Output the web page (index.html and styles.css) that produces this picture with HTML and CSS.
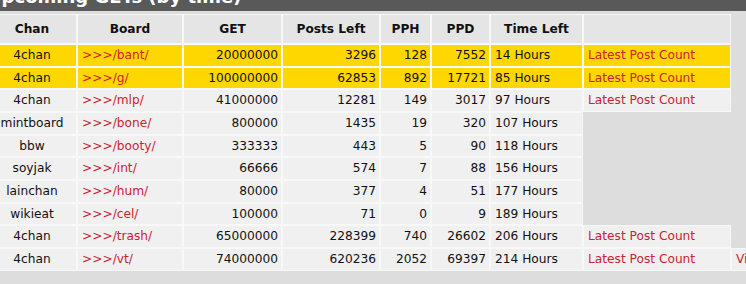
FILE: index.html
```html
<!DOCTYPE html>
<html>
<head>
<meta charset="utf-8">
<link rel="stylesheet" href="styles.css">
</head>
<body>
<div class="page">
  <div class="titlebar"><h2 class="title">Upcoming GETs (by time)</h2></div>
  <table class="gets">
    <colgroup>
      <col class="c-chan"><col class="c-board"><col class="c-get"><col class="c-left"><col class="c-pph"><col class="c-ppd"><col class="c-time"><col class="c-latest"><col class="c-extra">
    </colgroup>
    <thead>
      <tr><th>Chan</th><th>Board</th><th>GET</th><th>Posts Left</th><th>PPH</th><th>PPD</th><th>Time Left</th><th></th></tr>
    </thead>
    <tbody>
      <tr class="hot"><td class="ctr">4chan</td><td><a href="#">&gt;&gt;&gt;/bant/</a></td><td class="num">20000000</td><td class="num">3296</td><td class="num">128</td><td class="num">7552</td><td>14 Hours</td><td><a href="#">Latest Post Count</a></td></tr>
      <tr class="hot"><td class="ctr">4chan</td><td><a href="#">&gt;&gt;&gt;/g/</a></td><td class="num">100000000</td><td class="num">62853</td><td class="num">892</td><td class="num">17721</td><td>85 Hours</td><td><a href="#">Latest Post Count</a></td></tr>
      <tr><td class="ctr">4chan</td><td><a href="#">&gt;&gt;&gt;/mlp/</a></td><td class="num">41000000</td><td class="num">12281</td><td class="num">149</td><td class="num">3017</td><td>97 Hours</td><td><a href="#">Latest Post Count</a></td></tr>
      <tr><td class="ctr">mintboard</td><td><a href="#">&gt;&gt;&gt;/bone/</a></td><td class="num">800000</td><td class="num">1435</td><td class="num">19</td><td class="num">320</td><td>107 Hours</td></tr>
      <tr><td class="ctr">bbw</td><td><a href="#">&gt;&gt;&gt;/booty/</a></td><td class="num">333333</td><td class="num">443</td><td class="num">5</td><td class="num">90</td><td>118 Hours</td></tr>
      <tr><td class="ctr">soyjak</td><td><a href="#">&gt;&gt;&gt;/int/</a></td><td class="num">66666</td><td class="num">574</td><td class="num">7</td><td class="num">88</td><td>156 Hours</td></tr>
      <tr><td class="ctr">lainchan</td><td><a href="#">&gt;&gt;&gt;/hum/</a></td><td class="num">80000</td><td class="num">377</td><td class="num">4</td><td class="num">51</td><td>177 Hours</td></tr>
      <tr><td class="ctr">wikieat</td><td><a href="#">&gt;&gt;&gt;/cel/</a></td><td class="num">100000</td><td class="num">71</td><td class="num">0</td><td class="num">9</td><td>189 Hours</td></tr>
      <tr><td class="ctr">4chan</td><td><a href="#">&gt;&gt;&gt;/trash/</a></td><td class="num">65000000</td><td class="num">228399</td><td class="num">740</td><td class="num">26602</td><td>206 Hours</td><td><a href="#">Latest Post Count</a></td></tr>
      <tr><td class="ctr">4chan</td><td><a href="#">&gt;&gt;&gt;/vt/</a></td><td class="num">74000000</td><td class="num">620236</td><td class="num">2052</td><td class="num">69397</td><td>214 Hours</td><td><a href="#">Latest Post Count</a></td><td><a href="#">View Thread</a></td></tr>
    </tbody>
  </table>
</div>
</body>
</html>
```
FILE: styles.css
```css
html, body {
  margin: 0;
  padding: 0;
  background: #dddddd;
  overflow: hidden;
}
body {
  font-family: "DejaVu Sans", Verdana, sans-serif;
  font-size: 12.2px;
  color: #111;
}
.page {
  margin-left: -13px;
  width: 900px;
}
.titlebar {
  background: #595959;
  height: 34px;
  margin-top: -23px;
  overflow: hidden;
}
.title {
  margin: 0;
  padding: 9px 0 0 0;
  color: #ffffff;
  font-size: 18px;
  font-weight: bold;
  line-height: 22px;
}
.gets {
  margin-top: 3px;
  border-collapse: separate;
  border-spacing: 0;
  table-layout: fixed;
  width: 844px;
}
.c-chan { width: 90px; }
.c-board { width: 106px; }
.c-get { width: 99px; }
.c-left { width: 98px; }
.c-pph { width: 51px; }
.c-ppd { width: 59px; }
.c-time { width: 93px; }
.c-latest { width: 148px; }
.c-extra { width: 100px; }
th, td {
  box-sizing: border-box;
  border: 1px solid #f8f8f8;
  white-space: nowrap;
  overflow: hidden;
}
th {
  background: #e5e5e5;
  font-weight: bold;
  text-align: center;
  padding: 6px 4px;
  line-height: 16px;
  color: #111;
}
td {
  background: #f0f0f0;
  padding: 3px 4px;
  line-height: 14.67px;
  text-align: left;
}
tr.hot td {
  background: #ffd700;
}
td.ctr { text-align: center; }
td.num { text-align: right; padding-right: 3px; }
a {
  color: #cc2233;
  text-decoration: none;
}
```
